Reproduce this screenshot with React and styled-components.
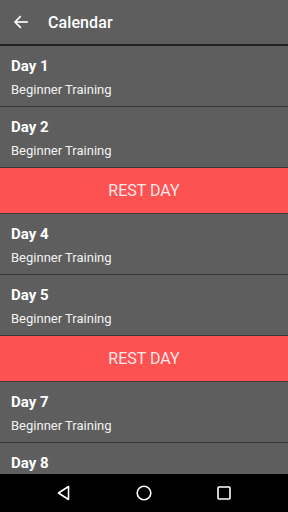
import styled, { createGlobalStyle } from "styled-components";

const Global = createGlobalStyle`
  html, body {
    margin: 0;
    padding: 0;
    background: #000;
  }
  body {
    font-family: Roboto, "Liberation Sans", sans-serif;
  }
`;

const Screen = styled.div`
  width: 288px;
  height: 512px;
  display: flex;
  flex-direction: column;
  background: #5e5e5e;
  overflow: hidden;
`;

const Toolbar = styled.header`
  height: 44px;
  flex-shrink: 0;
  display: flex;
  align-items: center;
  padding-left: 12px;
  gap: 18px;
  background: #5e5e5e;
  border-bottom: 2px solid #222;
  color: #fff;
`;

const Title = styled.h1`
  margin: 0;
  font-size: 16px;
  font-weight: 500;
  letter-spacing: 0.1px;
`;

const List = styled.div`
  flex: 1;
  overflow: hidden;
  display: flex;
  flex-direction: column;
`;

const DayRow = styled.div`
  height: 60px;
  flex-shrink: 0;
  box-sizing: content-box;
  border-bottom: 1px solid #3a3a3a;
  padding-left: 11px;
  display: flex;
  flex-direction: column;
  color: #fff;
`;

const DayName = styled.div`
  font-size: 15px;
  font-weight: 700;
  margin-top: 11px;
  line-height: 18px;
`;

const DaySub = styled.div`
  font-size: 13px;
  margin-top: 7px;
  line-height: 16px;
  color: #f2f2f2;
`;

const RestRow = styled.div`
  height: 45px;
  flex-shrink: 0;
  border-bottom: 1px solid #3a3a3a;
  background: #fd5252;
  color: #fde6e6;
  display: flex;
  align-items: center;
  justify-content: center;
  font-size: 16px;
`;

const NavBar = styled.nav`
  height: 38px;
  flex-shrink: 0;
  background: #000;
  display: flex;
  align-items: center;
  justify-content: center;
  gap: 62px;
`;

const days = [
  { n: 1 },
  { n: 2 },
  { rest: true },
  { n: 4 },
  { n: 5 },
  { rest: true },
  { n: 7 },
  { n: 8 },
];

export default function App() {
  return (
    <Screen>
      <Global />
      <Toolbar>
        <svg width="18" height="18" viewBox="0 0 24 24" fill="none" stroke="#fff" strokeWidth="2.2" strokeLinecap="square">
          <path d="M20 12H5" />
          <path d="M11 5l-7 7 7 7" />
        </svg>
        <Title>Calendar</Title>
      </Toolbar>
      <List>
        {days.map((d, i) =>
          d.rest ? (
            <RestRow key={i}>REST DAY</RestRow>
          ) : (
            <DayRow key={i}>
              <DayName>Day {d.n}</DayName>
              <DaySub>Beginner Training</DaySub>
            </DayRow>
          )
        )}
      </List>
      <NavBar>
        <svg width="18" height="18" viewBox="0 0 18 18" fill="none" stroke="#fff" strokeWidth="1.6">
          <path d="M13.5 2.5v13L3.5 9z" strokeLinejoin="round" />
        </svg>
        <svg width="18" height="18" viewBox="0 0 18 18" fill="none" stroke="#fff" strokeWidth="1.6">
          <circle cx="9" cy="9" r="6.8" />
        </svg>
        <svg width="18" height="18" viewBox="0 0 18 18" fill="none" stroke="#fff" strokeWidth="1.6">
          <rect x="3" y="3" width="12" height="12" rx="1" />
        </svg>
      </NavBar>
    </Screen>
  );
}
